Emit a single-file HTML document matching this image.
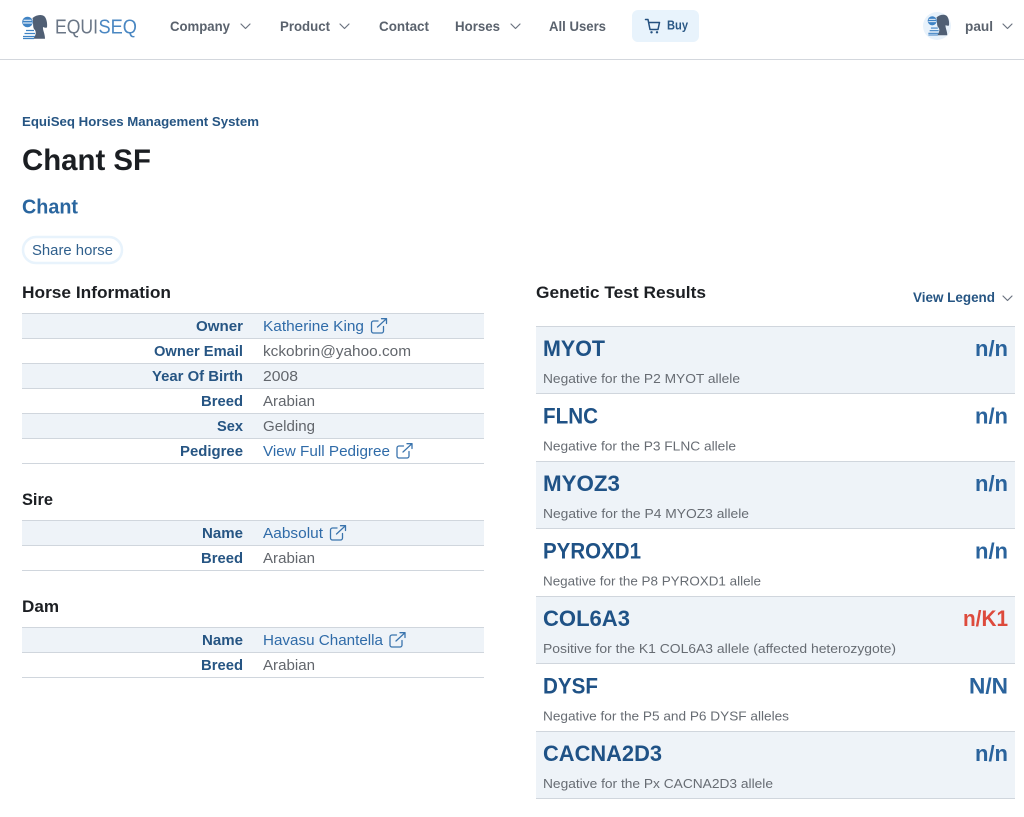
<!DOCTYPE html>
<html lang="en"><head><meta charset="utf-8"><title>Chant SF</title>
<style>
html,body{margin:0;padding:0;background:#fff;width:1024px;height:817px;overflow:hidden}
svg{display:block}
text{font-family:"Liberation Sans",sans-serif}
.nav{font-size:13.5px;font-weight:700;fill:#5a626d}
.lb{font-size:14.5px;font-weight:700;fill:#265583}
.lk{font-size:14.5px;fill:#2f6ba8}
.vl{font-size:14.5px;fill:#62666c}
.h2{font-size:17px;font-weight:700;fill:#1c1f23}
.gn{font-size:22px;font-weight:700;fill:#1f5286}
.rs{font-size:22px;font-weight:700;fill:#2a639c}
.ds{font-size:12.7px;fill:#676c73}
.line{fill:#d0d6dd}
.band{fill:#eef3f8}
.ch{fill:none;stroke:#6b7480;stroke-width:1.2;stroke-linecap:round;stroke-linejoin:round}
.ex{fill:none;stroke:#3a74ad;stroke-width:1.3;stroke-linecap:round;stroke-linejoin:round}
</style></head><body>
<svg width="1024" height="817" viewBox="0 0 1024 817" xmlns="http://www.w3.org/2000/svg">
<rect width="1024" height="817" fill="#fff"/>
<!-- header -->
<rect y="59" width="1024" height="1" fill="#d3d7dd"/>
<g>
<path d="M32.500 18 C36 15 41 14 44 16 C46.500 18 47.500 23 47 27.500 C45.500 28 44 27.500 43 27 C42.500 30 45 33.500 45 38.800 L33 38.800 C36.500 35 36.500 31 34 29 C32.500 26 33.500 22 32.500 18Z" fill="#505f74"/>
<circle cx="27.500" cy="22" r="5.300" fill="#3f83c4"/>
<path d="M23.500 20.300 H31.500 M23 23 H32" stroke="#fff" stroke-width="1"/>
<path d="M26 30.500 H34 M24.500 33.500 H35 M23 36.500 H35 M23 38.500 H34" stroke="#3f83c4" stroke-width="1.300"/>
</g>
<text x="55" y="33.500" font-size="20" textLength="43" lengthAdjust="spacingAndGlyphs" fill="#6a7686">EQUI</text>
<text x="98.500" y="33.500" font-size="20" textLength="38.500" lengthAdjust="spacingAndGlyphs" fill="#4a87c2">SEQ</text>
<text class="nav" x="170" y="31" textLength="60" lengthAdjust="spacingAndGlyphs">Company</text>
<path class="ch" d="M241 24 L245.500 28.500 L250 24"/>
<text class="nav" x="280" y="31" textLength="50" lengthAdjust="spacingAndGlyphs">Product</text>
<path class="ch" d="M340 24 L344.500 28.500 L349 24"/>
<text class="nav" x="379" y="31" textLength="50" lengthAdjust="spacingAndGlyphs">Contact</text>
<text class="nav" x="455" y="31" textLength="45" lengthAdjust="spacingAndGlyphs">Horses</text>
<path class="ch" d="M511 24 L515.500 28.500 L520 24"/>
<text class="nav" x="549" y="31" textLength="57" lengthAdjust="spacingAndGlyphs">All Users</text>
<rect x="632" y="10" width="67" height="32" rx="6" fill="#e8f3fc"/>
<path d="M645.500 19.500 H648 L650 29.500 H658 L659.500 22.500 H648.700" fill="none" stroke="#24507f" stroke-width="1.500" stroke-linecap="round" stroke-linejoin="round"/>
<circle cx="651.500" cy="32.300" r="1.200" fill="#24507f"/><circle cx="657" cy="32.300" r="1.200" fill="#24507f"/>
<text x="667" y="29.500" font-size="13" font-weight="700" fill="#2a5885" textLength="21" lengthAdjust="spacingAndGlyphs">Buy</text>
<circle cx="937" cy="26" r="14" fill="#e8f2fb"/>
<g transform="translate(927.500 13.500) scale(.86) translate(-22 -13.500)">
<path d="M32.500 18 C36 15 41 14 44 16 C46.500 18 47.500 23 47 27.500 C45.500 28 44 27.500 43 27 C42.500 30 45 33.500 45 38.800 L33 38.800 C36.500 35 36.500 31 34 29 C32.500 26 33.500 22 32.500 18Z" fill="#505f74"/>
<circle cx="27.500" cy="22" r="5.300" fill="#3f83c4"/>
<path d="M23.500 20.300 H31.500 M23 23 H32" stroke="#fff" stroke-width="1"/>
<path d="M26 30.500 H34 M24.500 33.500 H35 M23 36.500 H35 M23 38.500 H34" stroke="#3f83c4" stroke-width="1.300"/>
</g>
<text class="nav" x="965" y="31" textLength="28" lengthAdjust="spacingAndGlyphs">paul</text>
<path class="ch" d="M1003 24 L1007.500 28.500 L1012 24"/>
<!-- title -->
<text x="22" y="126" font-size="13" font-weight="700" fill="#265583" textLength="237" lengthAdjust="spacingAndGlyphs">EquiSeq Horses Management System</text>
<text x="22" y="170" font-size="30" font-weight="700" fill="#1b1e22" textLength="129" lengthAdjust="spacingAndGlyphs">Chant SF</text>
<text x="22" y="213.500" font-size="20.500" font-weight="700" fill="#2a669f" textLength="56" lengthAdjust="spacingAndGlyphs">Chant</text>
<rect x="23" y="237" width="99" height="26" rx="13" fill="#fff" stroke="#e8f3fc" stroke-width="2.500"/>
<text x="32" y="255" font-size="14.500" fill="#2f5f8c" textLength="81" lengthAdjust="spacingAndGlyphs">Share horse</text>
<!-- horse info -->
<text class="h2" x="22" y="298" textLength="149" lengthAdjust="spacingAndGlyphs">Horse Information</text>
<rect class="band" x="22" y="313" width="462" height="25"/><rect class="band" x="22" y="363" width="462" height="25"/><rect class="band" x="22" y="413" width="462" height="25"/>
<rect class="line" x="22" y="313" width="462" height="1"/><rect class="line" x="22" y="338" width="462" height="1"/><rect class="line" x="22" y="363" width="462" height="1"/><rect class="line" x="22" y="388" width="462" height="1"/><rect class="line" x="22" y="413" width="462" height="1"/><rect class="line" x="22" y="438" width="462" height="1"/><rect class="line" x="22" y="463" width="462" height="1"/>
<text class="lb" x="196" y="331" textLength="47" lengthAdjust="spacingAndGlyphs">Owner</text>
<text class="lk" x="263" y="331" textLength="101" lengthAdjust="spacingAndGlyphs">Katherine King</text>
<g transform="translate(371 318)"><path class="ex" d="M7 3 H2.500 A2 2 0 0 0 .5 5 V13 A2 2 0 0 0 2.500 15 H10.500 A2 2 0 0 0 12.500 13 V8.500 M6.500 9 L15.500 .7 M10.500 .7 H15.500 V5.500"/></g>
<text class="lb" x="154" y="356" textLength="89" lengthAdjust="spacingAndGlyphs">Owner Email</text>
<text class="vl" x="263" y="356" textLength="148" lengthAdjust="spacingAndGlyphs">kckobrin@yahoo.com</text>
<text class="lb" x="152" y="381" textLength="91" lengthAdjust="spacingAndGlyphs">Year Of Birth</text>
<text class="vl" x="263" y="381" textLength="35" lengthAdjust="spacingAndGlyphs">2008</text>
<text class="lb" x="201" y="406" textLength="42" lengthAdjust="spacingAndGlyphs">Breed</text>
<text class="vl" x="263" y="406" textLength="52" lengthAdjust="spacingAndGlyphs">Arabian</text>
<text class="lb" x="217" y="431" textLength="26" lengthAdjust="spacingAndGlyphs">Sex</text>
<text class="vl" x="263" y="431" textLength="52" lengthAdjust="spacingAndGlyphs">Gelding</text>
<text class="lb" x="180" y="456" textLength="63" lengthAdjust="spacingAndGlyphs">Pedigree</text>
<text class="lk" x="263" y="456" textLength="127" lengthAdjust="spacingAndGlyphs">View Full Pedigree</text>
<g transform="translate(396.500 443)"><path class="ex" d="M7 3 H2.500 A2 2 0 0 0 .5 5 V13 A2 2 0 0 0 2.500 15 H10.500 A2 2 0 0 0 12.500 13 V8.500 M6.500 9 L15.500 .7 M10.500 .7 H15.500 V5.500"/></g>
<!-- sire -->
<text class="h2" x="22" y="505" textLength="31" lengthAdjust="spacingAndGlyphs">Sire</text>
<rect class="band" x="22" y="520" width="462" height="25"/>
<rect class="line" x="22" y="520" width="462" height="1"/><rect class="line" x="22" y="545" width="462" height="1"/><rect class="line" x="22" y="570" width="462" height="1"/>
<text class="lb" x="202" y="538" textLength="41" lengthAdjust="spacingAndGlyphs">Name</text>
<text class="lk" x="263" y="538" textLength="60" lengthAdjust="spacingAndGlyphs">Aabsolut</text>
<g transform="translate(330 525)"><path class="ex" d="M7 3 H2.500 A2 2 0 0 0 .5 5 V13 A2 2 0 0 0 2.500 15 H10.500 A2 2 0 0 0 12.500 13 V8.500 M6.500 9 L15.500 .7 M10.500 .7 H15.500 V5.500"/></g>
<text class="lb" x="201" y="563" textLength="42" lengthAdjust="spacingAndGlyphs">Breed</text>
<text class="vl" x="263" y="563" textLength="52" lengthAdjust="spacingAndGlyphs">Arabian</text>
<!-- dam -->
<text class="h2" x="22" y="612" textLength="37" lengthAdjust="spacingAndGlyphs">Dam</text>
<rect class="band" x="22" y="627" width="462" height="25"/>
<rect class="line" x="22" y="627" width="462" height="1"/><rect class="line" x="22" y="652" width="462" height="1"/><rect class="line" x="22" y="677" width="462" height="1"/>
<text class="lb" x="202" y="645" textLength="41" lengthAdjust="spacingAndGlyphs">Name</text>
<text class="lk" x="263" y="645" textLength="120" lengthAdjust="spacingAndGlyphs">Havasu Chantella</text>
<g transform="translate(389.500 632)"><path class="ex" d="M7 3 H2.500 A2 2 0 0 0 .5 5 V13 A2 2 0 0 0 2.500 15 H10.500 A2 2 0 0 0 12.500 13 V8.500 M6.500 9 L15.500 .7 M10.500 .7 H15.500 V5.500"/></g>
<text class="lb" x="201" y="670" textLength="42" lengthAdjust="spacingAndGlyphs">Breed</text>
<text class="vl" x="263" y="670" textLength="52" lengthAdjust="spacingAndGlyphs">Arabian</text>
<!-- genetic -->
<text class="h2" x="536" y="298" textLength="170" lengthAdjust="spacingAndGlyphs">Genetic Test Results</text>
<text x="913" y="302" font-size="13.500" font-weight="700" fill="#265583" textLength="82" lengthAdjust="spacingAndGlyphs">View Legend</text>
<path class="ch" d="M1003 296 L1007.500 300.500 L1012 296"/>
<rect class="band" x="536" y="326" width="479" height="68"/>
<rect class="band" x="536" y="461" width="479" height="68"/>
<rect class="band" x="536" y="596" width="479" height="68"/>
<rect class="band" x="536" y="731" width="479" height="68"/>
<rect class="line" x="536" y="326" width="479" height="1"/><rect class="line" x="536" y="393" width="479" height="1"/><rect class="line" x="536" y="461" width="479" height="1"/><rect class="line" x="536" y="528" width="479" height="1"/><rect class="line" x="536" y="596" width="479" height="1"/><rect class="line" x="536" y="663" width="479" height="1"/><rect class="line" x="536" y="731" width="479" height="1"/><rect class="line" x="536" y="798" width="479" height="1"/>

<text class="gn" x="543" y="356" textLength="62" lengthAdjust="spacingAndGlyphs">MYOT</text>
<text class="rs" x="975" y="356" textLength="33" lengthAdjust="spacingAndGlyphs">n/n</text>
<text class="ds" x="543" y="383" textLength="197" lengthAdjust="spacingAndGlyphs">Negative for the P2 MYOT allele</text>

<text class="gn" x="543" y="423.500" textLength="55" lengthAdjust="spacingAndGlyphs">FLNC</text>
<text class="rs" x="975" y="423.500" textLength="33" lengthAdjust="spacingAndGlyphs">n/n</text>
<text class="ds" x="543" y="450.500" textLength="193" lengthAdjust="spacingAndGlyphs">Negative for the P3 FLNC allele</text>

<text class="gn" x="543" y="491" textLength="77" lengthAdjust="spacingAndGlyphs">MYOZ3</text>
<text class="rs" x="975" y="491" textLength="33" lengthAdjust="spacingAndGlyphs">n/n</text>
<text class="ds" x="543" y="518" textLength="206" lengthAdjust="spacingAndGlyphs">Negative for the P4 MYOZ3 allele</text>

<text class="gn" x="543" y="558.500" textLength="98" lengthAdjust="spacingAndGlyphs">PYROXD1</text>
<text class="rs" x="975" y="558.500" textLength="33" lengthAdjust="spacingAndGlyphs">n/n</text>
<text class="ds" x="543" y="585.500" textLength="218" lengthAdjust="spacingAndGlyphs">Negative for the P8 PYROXD1 allele</text>

<text class="gn" x="543" y="626" textLength="87" lengthAdjust="spacingAndGlyphs">COL6A3</text>
<text class="rs" x="963" y="626" textLength="45" lengthAdjust="spacingAndGlyphs" style="fill:#dd4a3c">n/K1</text>
<text class="ds" x="543" y="653" textLength="353" lengthAdjust="spacingAndGlyphs">Positive for the K1 COL6A3 allele (affected heterozygote)</text>

<text class="gn" x="543" y="693.500" textLength="55" lengthAdjust="spacingAndGlyphs">DYSF</text>
<text class="rs" x="969" y="693.500" textLength="39" lengthAdjust="spacingAndGlyphs">N/N</text>
<text class="ds" x="543" y="720.500" textLength="246" lengthAdjust="spacingAndGlyphs">Negative for the P5 and P6 DYSF alleles</text>

<text class="gn" x="543" y="761" textLength="119" lengthAdjust="spacingAndGlyphs">CACNA2D3</text>
<text class="rs" x="975" y="761" textLength="33" lengthAdjust="spacingAndGlyphs">n/n</text>
<text class="ds" x="543" y="788" textLength="230" lengthAdjust="spacingAndGlyphs">Negative for the Px CACNA2D3 allele</text>
</svg>
</body></html>
